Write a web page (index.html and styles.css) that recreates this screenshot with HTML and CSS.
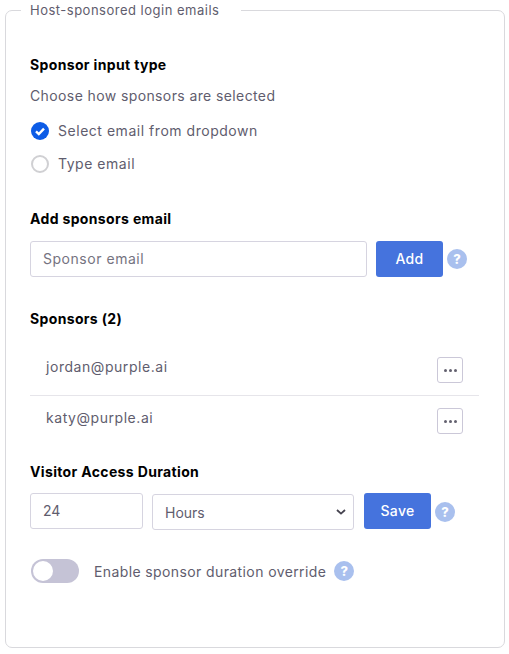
FILE: index.html
```html
<!DOCTYPE html>
<html lang="en">
<head>
<meta charset="utf-8">
<title>Host-sponsored login emails</title>
<link rel="stylesheet" href="styles.css">
</head>
<body>
<fieldset class="panel">
  <legend class="panel-legend">Host-sponsored login emails</legend>

  <h3 class="heading heading-first">Sponsor input type</h3>
  <p class="hint">Choose how sponsors are selected</p>
  <div class="radio-row">
    <svg class="radio" viewBox="0 0 18 18" aria-hidden="true"><circle cx="9" cy="9" r="9" fill="#0d5ce6"/><path d="M5 9.4l2.8 2.7L13 6.6" fill="none" stroke="#fff" stroke-width="2.4"/></svg>
    <span>Select email from dropdown</span>
  </div>
  <div class="radio-row radio-row-second">
    <span class="radio radio-off"></span>
    <span>Type email</span>
  </div>

  <h3 class="heading heading-add">Add sponsors email</h3>
  <div class="control-row">
    <input class="field field-email" type="text" placeholder="Sponsor email">
    <button class="btn btn-add" type="button">Add</button>
    <span class="help">?</span>
  </div>

  <h3 class="heading heading-sponsors">Sponsors (2)</h3>
  <ul class="sponsors">
    <li class="sponsor sponsor-first"><span class="sponsor-email">jordan@purple.ai</span><button class="more" type="button" aria-label="More"><i></i><i></i><i></i></button></li>
    <li class="sponsor sponsor-second"><span class="sponsor-email">katy@purple.ai</span><button class="more" type="button" aria-label="More"><i></i><i></i><i></i></button></li>
  </ul>

  <h3 class="heading heading-duration">Visitor Access Duration</h3>
  <div class="control-row duration-row">
    <input class="field field-number" type="text" value="24">
    <div class="select-box"><span>Hours</span><svg viewBox="0 0 10 6" class="chevron" aria-hidden="true"><path d="M1 1l4 3.6L9 1" fill="none" stroke="#45434f" stroke-width="1.8"/></svg></div>
    <button class="btn btn-save" type="button">Save</button>
    <span class="help">?</span>
  </div>

  <div class="toggle-row">
    <span class="toggle"><span class="knob"></span></span>
    <span class="toggle-label">Enable sponsor duration override</span>
    <span class="help">?</span>
  </div>
</fieldset>
</body>
</html>
```
FILE: styles.css
```css
* { box-sizing: border-box; }
html, body { margin: 0; padding: 0; background: #fff; }
body {
  width: 509px;
  height: 654px;
  overflow: hidden;
  font-family: "Inter", "Liberation Sans", sans-serif;
  font-size: 14px;
  color: #5f5d6e;
}
.panel {
  margin: 2px 4px 0 5px;
  padding: 0 24px;
  height: 646px;
  border: 1px solid #d9d9dd;
  border-radius: 7px;
  min-width: 0;
}
.panel-legend {
  padding: 0 22px 0 9px;
  margin-left: -9px;
  font-size: 13px;
  line-height: 17px;
  letter-spacing: 0.5px;
  color: #5f5d6e;
}
.heading {
  margin: 0;
  font-size: 14px;
  line-height: 20px;
  font-weight: 700;
  letter-spacing: 0.35px;
  color: #000;
}
.heading-first { margin-top: 36px; }
.hint { margin: 11px 0 0; line-height: 20px; letter-spacing: 0.39px; }
.radio-row { display: flex; align-items: center; gap: 9px; margin-top: 14px; height: 20px; letter-spacing: 0.53px; }
.radio-row-second { margin-top: 13px; }
.radio { width: 18px; height: 18px; margin: 2px 0 0 1px; flex: none; display: block; }
.radio-off { border: 2px solid #d0d0d3; border-radius: 50%; }
.heading-add { margin-top: 36px; }
.control-row { display: flex; align-items: center; margin-top: 12px; }
.field {
  height: 36px;
  border: 1px solid #d6d4e0;
  border-radius: 3px;
  padding: 0 12px 2px;
  font: inherit;
  letter-spacing: 0.53px;
  color: #5f5d6e;
  background: #fff;
  outline: none;
}
.field::placeholder { color: #75737f; opacity: 1; }
.field-email { width: 337px; }
.btn {
  border: 0;
  border-radius: 3px;
  background: #4573dd;
  color: #fff;
  width: 67px;
  height: 36px;
  font: inherit;
  font-weight: 500;
  letter-spacing: 0.3px;
  padding: 0 0 2px;
}
.btn-add { margin-left: 9px; }
.help {
  width: 20px;
  height: 20px;
  margin-left: 4px;
  flex: none;
  border-radius: 50%;
  background: #a9c0ee;
  color: #fff;
  font-size: 13px;
  font-weight: 800;
  line-height: 20px;
  text-align: center;
}
.heading-sponsors { margin-top: 32px; }
.sponsors { list-style: none; margin: 0; padding: 0; width: 449px; }
.sponsor { display: flex; justify-content: space-between; padding: 12px 16px 0; letter-spacing: 0.55px; }
.sponsor-email { margin-top: 1px; }
.sponsor-first { margin-top: 16px; height: 51px; border-bottom: 1px solid #e6e5ea; }
.sponsor-second { height: 66px; }
.more {
  width: 26px;
  height: 26px;
  display: flex;
  align-items: center;
  justify-content: center;
  gap: 2px;
  padding: 0;
  background: #fff;
  border: 1px solid #cbc8d8;
  border-radius: 3px;
}
.more i { width: 3px; height: 3px; border-radius: 50%; background: #63616f; }
.duration-row { margin-top: 11px; }
.field-number { width: 113px; height: 36px; margin-bottom: 1px; letter-spacing: 0; }
.select-box {
  width: 202px;
  height: 36px;
  margin-left: 9px;
  margin-top: 1px;
  padding: 0 7px 0 12px;
  display: flex;
  align-items: center;
  justify-content: space-between;
  border: 1px solid #d6d4e0;
  border-radius: 3px;
}
.chevron { width: 10px; height: 6px; }
.btn-save { margin-left: 10px; margin-bottom: 1px; }
.toggle-row { display: flex; align-items: center; margin-top: 29px; }
.toggle { width: 48px; height: 24px; margin-left: 1px; border-radius: 12px; background: #c5c3d6; padding: 2px; display: block; flex: none; }
.knob { display: block; width: 20px; height: 20px; border-radius: 50%; background: #fff; }
.toggle-label { margin-left: 15px; letter-spacing: 0.39px; }
.toggle-row .help { margin-left: 8px; }
```
